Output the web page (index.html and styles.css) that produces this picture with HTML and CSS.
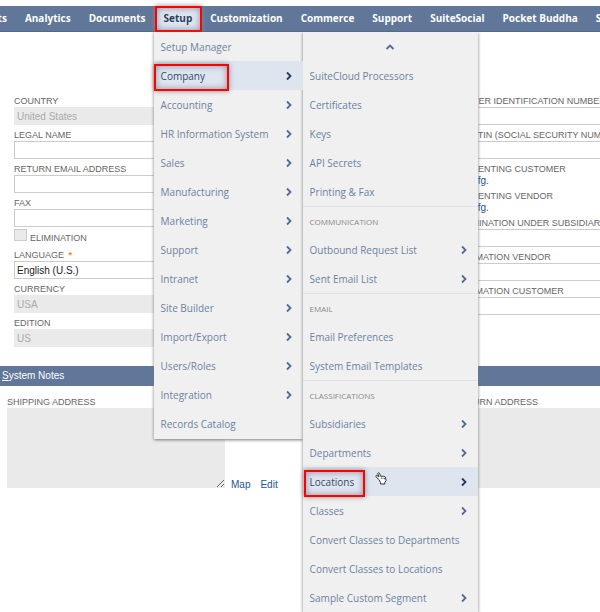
FILE: index.html
```html
<!DOCTYPE html>
<html lang="en">
<head>
<meta charset="utf-8">
<title>Subsidiary</title>
<link rel="stylesheet" href="styles.css">
</head>
<body>
<svg class="sprite" aria-hidden="true">
  <symbol id="chevron" viewBox="0 0 8 10"><path d="M2 1.5 5.5 5 2 8.5" fill="none" stroke="currentColor" stroke-width="1.8"/></symbol>
</svg>
<div class="page">
  <nav class="nav">
    <ul class="tabs">
      <li class="tab"><a href="#">Reports</a></li>
      <li class="tab"><a href="#">Analytics</a></li>
      <li class="tab"><a href="#">Documents</a></li>
      <li class="tab open"><a class="marked" href="#">Setup</a>
        <div class="menus">
          <ul class="menu main-menu">
            <li><a href="#">Setup Manager</a></li>
            <li class="current"><a href="#"><span class="marked">Company</span><svg><use href="#chevron"/></svg></a></li>
            <li><a href="#">Accounting<svg><use href="#chevron"/></svg></a></li>
            <li><a href="#">HR Information System<svg><use href="#chevron"/></svg></a></li>
            <li><a href="#">Sales<svg><use href="#chevron"/></svg></a></li>
            <li><a href="#">Manufacturing<svg><use href="#chevron"/></svg></a></li>
            <li><a href="#">Marketing<svg><use href="#chevron"/></svg></a></li>
            <li><a href="#">Support<svg><use href="#chevron"/></svg></a></li>
            <li><a href="#">Intranet<svg><use href="#chevron"/></svg></a></li>
            <li><a href="#">Site Builder<svg><use href="#chevron"/></svg></a></li>
            <li><a href="#">Import/Export<svg><use href="#chevron"/></svg></a></li>
            <li><a href="#">Users/Roles<svg><use href="#chevron"/></svg></a></li>
            <li><a href="#">Integration<svg><use href="#chevron"/></svg></a></li>
            <li><a href="#">Records Catalog</a></li>
          </ul>
          <ul class="menu sub-menu">
            <li><button class="scroll-up" type="button" aria-label="Scroll up"><svg viewBox="0 0 10 8"><path d="M1.5 6 5 2.5 8.5 6" fill="none" stroke="currentColor" stroke-width="1.8"/></svg></button></li>
            <li><a href="#">SuiteCloud Processors</a></li>
            <li><a href="#">Certificates</a></li>
            <li><a href="#">Keys</a></li>
            <li><a href="#">API Secrets</a></li>
            <li><a href="#">Printing &amp; Fax</a></li>
            <li class="group">COMMUNICATION</li>
            <li><a href="#">Outbound Request List<svg><use href="#chevron"/></svg></a></li>
            <li><a href="#">Sent Email List<svg><use href="#chevron"/></svg></a></li>
            <li class="group">EMAIL</li>
            <li><a href="#">Email Preferences</a></li>
            <li><a href="#">System Email Templates</a></li>
            <li class="group">CLASSIFICATIONS</li>
            <li><a href="#">Subsidiaries<svg><use href="#chevron"/></svg></a></li>
            <li><a href="#">Departments<svg><use href="#chevron"/></svg></a></li>
            <li class="current"><a href="#"><span class="marked">Locations</span><svg><use href="#chevron"/></svg></a>
              <svg class="pointer" viewBox="0 0 12 13" aria-hidden="true"><path d="M4.3 8 1 4.8C.3 3.9 1.3 3 2.2 3.6L4 5 2.8 1.8C2.5.7 4 .3 4.5 1.3L5.6 4.2 8.5 4.3 10.5 5.2 11 8.5 9.800 10.5V12H5.500V10.600Z" fill="#fff" stroke="#333" stroke-width="1"/><path d="M6.300 5.500V7M8 5.600V7M9.500 6V7.300" stroke="#333" stroke-width=".7"/></svg></li>
            <li><a href="#">Classes<svg><use href="#chevron"/></svg></a></li>
            <li><a href="#">Convert Classes to Departments</a></li>
            <li><a href="#">Convert Classes to Locations</a></li>
            <li><a href="#">Sample Custom Segment<svg><use href="#chevron"/></svg></a></li>
          </ul>
        </div>
      </li>
      <li class="tab"><a href="#">Customization</a></li>
      <li class="tab"><a href="#">Commerce</a></li>
      <li class="tab"><a href="#">Support</a></li>
      <li class="tab"><a href="#">SuiteSocial</a></li>
      <li class="tab"><a href="#">Pocket Buddha</a></li>
      <li class="tab"><a href="#">Support</a></li>
    </ul>
  </nav>
  <main>
    <form>
      <div class="fields">
        <div class="column">
          <div class="field"><label for="country">COUNTRY</label><input id="country" value="United States" disabled></div>
          <div class="field"><label for="legal">LEGAL NAME</label><input id="legal"></div>
          <div class="field"><label for="email">RETURN EMAIL ADDRESS</label><input id="email"></div>
          <div class="field"><label for="fax">FAX</label><input id="fax"></div>
          <div class="check"><input type="checkbox" id="elim"><label for="elim">ELIMINATION</label></div>
          <div class="field"><label for="lang">LANGUAGE <span class="required">*</span></label><select id="lang"><option>English (U.S.)</option></select></div>
          <div class="field"><label for="currency">CURRENCY</label><input id="currency" value="USA" disabled></div>
          <div class="field"><label for="edition">EDITION</label><input id="edition" value="US" disabled></div>
        </div>
        <div class="column">
          <div class="field"><label for="ein">EMPLOYER IDENTIFICATION NUMBER</label><input id="ein"></div>
          <div class="field"><label for="tin">SSN OR TIN (SOCIAL SECURITY NUMBER)</label><input id="tin"></div>
          <div class="fact"><span>REPRESENTING CUSTOMER</span><a href="#">Acme Mfg.</a></div>
          <div class="fact"><span>REPRESENTING VENDOR</span><a href="#">Acme Mfg.</a></div>
          <div class="field"><label for="under">DETERMINATION UNDER SUBSIDIARY</label><input id="under"></div>
          <div class="field"><label for="vendor">CONFIRMATION VENDOR</label><input id="vendor"></div>
          <div class="field"><label for="customer">CONFIRMATION CUSTOMER</label><input id="customer"></div>
        </div>
      </div>
      <h2 class="section"><u>S</u>ystem Notes</h2>
      <div class="addresses">
        <div class="address"><label for="ship">SHIPPING ADDRESS</label><textarea id="ship" readonly></textarea></div>
        <div class="links"><a href="#">Map</a><a href="#">Edit</a></div>
        <div class="address return"><label for="return">RETURN ADDRESS</label><textarea id="return" readonly></textarea></div>
      </div>
    </form>
  </main>
</div>
</body>
</html>
```
FILE: styles.css
```css
* { box-sizing: border-box; }
body { margin: 0; background: #fff; font-family: "Liberation Sans", Arial, sans-serif; font-size: 9px; color: #666; }
a { text-decoration: none; }
ul { list-style: none; margin: 0; padding: 0; }
.sprite { display: none; }
.page { min-height: 100vh; padding-top: 6px; overflow: hidden; }

.nav { background: #607799; border-bottom: 1px solid #50698c; }
.tabs { display: flex; margin-left: -41px; font-family: "Open Sans", sans-serif; }
.tab { flex: none; }
.tab > a { display: block; padding: 0 9px; font-size: 10px; font-weight: 700; line-height: 24px; height: 25px; color: #fff; }
.tab.open { position: relative; }
.tab.open > a { background: #dfe5ef; color: #2c3f61; }

.menus { position: absolute; z-index: 2; top: 26px; left: -1px; display: flex; align-items: flex-start; }
.menu { background: #f0f0f0; box-shadow: 0 1px 3px #777; font-size: 10px; line-height: 29px; }
.main-menu { width: 149px; height: 407px; }
.sub-menu { width: 175px; }
.menu li { position: relative; height: 29px; white-space: nowrap; }
.menu a { display: flex; align-items: center; justify-content: space-between; height: 29px; padding: 1px 10px 0 7px; color: #6c82a3; }
.menu a svg { width: 8px; height: 10px; color: #506c98; }
.menu .current > a { background: #dfe5ef; color: #34496c; }
.menu .current > a svg { color: #223a60; }
.menu .group { padding-left: 7px; border-top: 1px solid #e2e2e2; font-size: 8px; color: #888; }
.scroll-up { display: flex; align-items: center; justify-content: center; width: 100%; height: 29px; padding: 0; border: 0; background: none; color: #506c98; }
.scroll-up svg { width: 10px; height: 8px; }
.marked { position: relative; }
.marked::after { content: ""; position: absolute; inset: 0 -1px -1px 0; border: 2px solid #f00; box-shadow: 0 0 5px #888, inset 0 0 6px #8590a5; }
.menu .marked::after { inset: 2px -24px 0 -7px; }
.sub-menu .marked::after { inset: 2px -11px 0 -6px; }
.pointer { position: absolute; top: 5px; left: 72px; width: 12px; height: 13px; }

.fields { display: grid; grid-template-columns: 1fr 1fr; column-gap: 148px; width: 120%; padding: 59px 0 19px 14px; }
.column { min-width: 0; }
label, .fact span { display: block; line-height: 16px; padding-top: 2px; height: 16px; white-space: nowrap; }
input, select, textarea { display: block; width: 100%; margin: 0; border: 1px solid #ccc; border-radius: 0; background: #fff; font: inherit; color: #333; }
.field input, .field select { height: 18px; padding: 0 2px; font-size: 10px; appearance: none; }
.field select { color: #222; }
input:disabled { background: #eaeaea; border-color: #eaeaea; color: #aaa; }
.required { padding-left: 2px; color: #e08a1c; font-weight: 700; }
.check { display: flex; height: 18px; padding-top: 2px; gap: 3px; }
.check input { width: 13px; height: 12px; border-color: #ccc; background: #eaeaea; appearance: none; }
.check label { line-height: 14px; }
.fact { height: 27px; }
.fact a { display: block; font-size: 10px; line-height: 11px; color: #255599; }

.section { margin: 0; padding-left: 2px; background: #607799; color: #fff; font-size: 10px; font-weight: 400; line-height: 20px; }
.addresses { display: flex; align-items: flex-end; padding: 6px 0 0 7px; }
.address { flex: 0 0 218px; }
.address textarea { height: 80px; border: 0; background: #eaeaea; }
.address.return { flex: 1; }
.address.return textarea { resize: none; }
.links { display: flex; flex: 0 0 230px; gap: 10px; padding-left: 6px; font-size: 10px; line-height: 6px; }
.links a { color: #255599; }
```
